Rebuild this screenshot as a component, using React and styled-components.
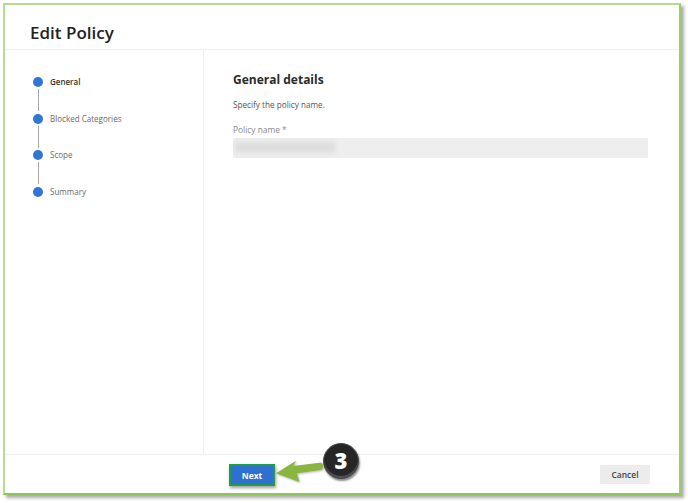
import styled, { createGlobalStyle } from "styled-components";

const GlobalStyle = createGlobalStyle`
  html, body {
    margin: 0;
    padding: 0;
    background: #ffffff;
    font-family: "Open Sans", "Noto Sans", sans-serif;
  }
`;

const steps = ["General", "Blocked Categories", "Scope", "Summary"];

const App = () => {
  return (
    <Page>
      <GlobalStyle />
      <Frame>
        <Header>
          <Title>Edit Policy</Title>
        </Header>

        <Body>
          <Sidebar>
            {steps.map((step, idx) => (
              <Step key={step} $last={idx === steps.length - 1}>
                <Dot />
                <StepLabel $active={idx === 0}>{step}</StepLabel>
              </Step>
            ))}
          </Sidebar>

          <Content>
            <SectionTitle>General details</SectionTitle>
            <Hint>Specify the policy name.</Hint>
            <FieldLabel>Policy name *</FieldLabel>
            <Field>
              <Redacted />
            </Field>
          </Content>
        </Body>

        <Footer>
          <NextButton>Next</NextButton>
          <CancelButton>Cancel</CancelButton>
          <Callout>
            <ArrowIcon width="47" height="23" viewBox="0 0 47 23">
              <path
                d="M0 13.3 L20 0.7 L17.3 6 L44 2.8 Q47 2.6 47 6.3 Q47 9.6 44 10 L20.7 13.3 L23.3 22 Z"
                fill="#8ab53f"
              />
            </ArrowIcon>
            <Badge>3</Badge>
          </Callout>
        </Footer>
      </Frame>
    </Page>
  );
};

export default App;

const Page = styled.div`
  width: 688px;
  height: 503px;
  padding: 3px 0 0 3px;
  box-sizing: border-box;
  overflow: hidden;
  background: #ffffff;
`;

const Frame = styled.div`
  width: 678px;
  height: 492px;
  box-sizing: border-box;
  border: 2px solid #b4dc90;
  border-bottom-color: #8cc653;
  border-right-color: #9ccd6c;
  box-shadow: 3px 3px 3px rgba(90, 90, 90, 0.5);
  background: #ffffff;
  display: flex;
  flex-direction: column;
`;

const Header = styled.div`
  height: 45px;
  flex: none;
  box-sizing: border-box;
  padding: 16px 0 0 25px;
  border-bottom: 1px solid #eeeeee;
`;

const Title = styled.div`
  font-size: 17px;
  line-height: 24px;
  font-weight: 600;
  color: #222222;
`;

const Body = styled.div`
  flex: 1;
  min-height: 0;
  display: flex;
`;

const Sidebar = styled.div`
  width: 199px;
  flex: none;
  box-sizing: border-box;
  padding: 27px 0 0 28px;
  border-right: 1px solid #eeeeee;
`;

const Step = styled.div`
  position: relative;
  height: 36.5px;
  display: flex;
  align-items: flex-start;
  gap: 7px;

  &::after {
    content: "";
    display: ${(p) => (p.$last ? "none" : "block")};
    position: absolute;
    left: 4.5px;
    top: 12px;
    width: 1px;
    height: 22px;
    background: #a6a6a6;
  }
`;

const Dot = styled.div`
  width: 10px;
  height: 10px;
  border-radius: 50%;
  background: #2f76d6;
  flex: none;
`;

const StepLabel = styled.div`
  font-size: ${(p) => (p.$active ? "8px" : "8.05px")};
  line-height: 10px;
  font-weight: ${(p) => (p.$active ? 600 : 400)};
  color: ${(p) => (p.$active ? "#333333" : "#6b6b6b")};
`;

const Content = styled.div`
  flex: 1;
  box-sizing: border-box;
  padding: 21px 31px 0 29px;
`;

const SectionTitle = styled.div`
  font-size: 12px;
  line-height: 18px;
  font-weight: 700;
  color: #2b2b2b;
`;

const Hint = styled.div`
  margin-top: 10px;
  font-size: 8.2px;
  line-height: 12px;
  color: #555555;
`;

const FieldLabel = styled.div`
  margin-top: 13px;
  font-size: 8.4px;
  line-height: 12px;
  color: #8a8a8a;
`;

const Field = styled.div`
  margin-top: 2px;
  height: 20px;
  box-sizing: border-box;
  padding: 4px 0 0 2px;
  background: #eeeeee;
`;

const Redacted = styled.div`
  width: 100px;
  height: 11px;
  background: #dedede;
  filter: blur(2px);
`;

const Footer = styled.div`
  position: relative;
  height: 39px;
  flex: none;
  box-sizing: border-box;
  padding: 9px 29px 0 224px;
  border-top: 1px solid #eeeeee;
  display: flex;
  justify-content: space-between;
  align-items: flex-start;
`;

const NextButton = styled.button`
  width: 46px;
  height: 22px;
  padding: 0;
  box-sizing: border-box;
  border: 2px solid #1f9e4a;
  background: #2f6fd0;
  box-shadow: 1px 2px 3px rgba(60, 60, 60, 0.5);
  color: #ffffff;
  font-family: inherit;
  font-size: 8.5px;
  font-weight: 700;
`;

const CancelButton = styled.button`
  width: 50px;
  height: 19px;
  margin-top: 1px;
  padding: 0;
  border: none;
  background: #ececec;
  color: #444444;
  font-family: inherit;
  font-size: 8.5px;
  font-weight: 600;
`;

const Callout = styled.div`
  position: absolute;
  left: 271px;
  top: -12px;
  display: flex;
  align-items: flex-start;
`;

const ArrowIcon = styled.svg`
  margin-top: 17px;
  flex: none;
  filter: drop-shadow(1px 1px 1px rgba(60, 60, 60, 0.4));
`;

const Badge = styled.div`
  width: 36px;
  height: 36px;
  box-sizing: border-box;
  border-radius: 50%;
  background: #262626;
  border: 1px solid #4a4a4a;
  box-shadow: 1px 2px 2px rgba(60, 60, 60, 0.6), inset 0 -2px 1px #555555;
  color: #ffffff;
  font-size: 22px;
  font-weight: 800;
  line-height: 32px;
  text-align: center;
`;
